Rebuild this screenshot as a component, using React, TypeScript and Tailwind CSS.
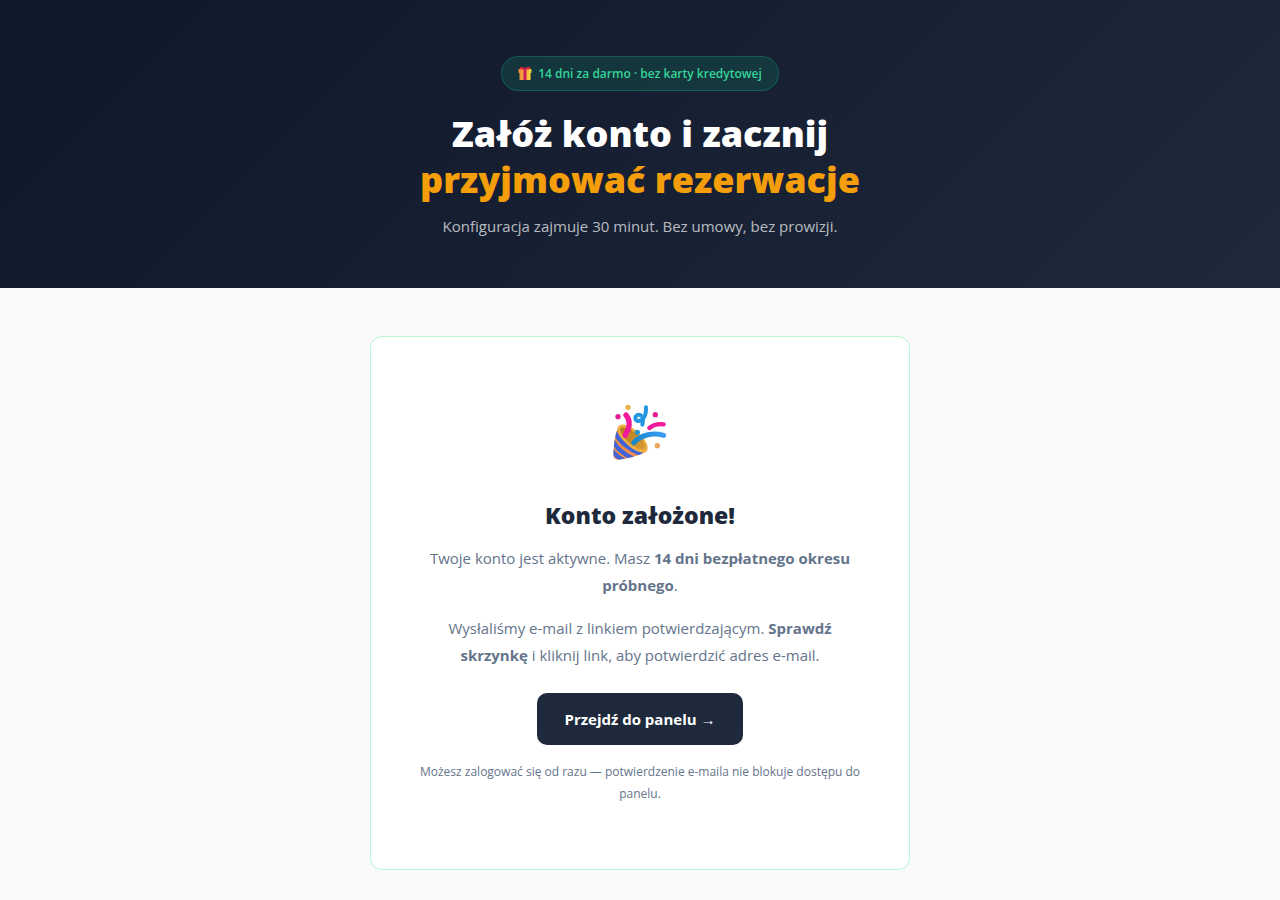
import React from "react";

function GiftIcon() {
    return (
        <svg className="size-4 shrink-0" viewBox="0 0 16 16" aria-hidden="true">
            <defs>
                <linearGradient id="giftBox" x1="0" y1="0" x2="1" y2="0">
                    <stop offset="0" stopColor="#f28c3a" />
                    <stop offset="1" stopColor="#fcd53f" />
                </linearGradient>
            </defs>
            <rect x="1.500" y="4" width="11" height="10" rx="0.6" fill="url(#giftBox)" />
            <rect x="0.500" y="3" width="13" height="4" rx="0.8" fill="url(#giftBox)" />
            <rect x="5.500" y="2.500" width="3" height="11.5" fill="#c8205f" />
            <path d="M1.500 2.300c0-1.100 2.200-1.600 3.800-.9l1.700.8 1.700-.8c1.600-.7 3.800-.2 3.800.9 0 .9-1.300 1.300-2.800 1.300H4.300c-1.500 0-2.800-.4-2.800-1.300z" fill="#d9263f" />
        </svg>
    );
}

function PartyIcon() {
    return (
        <svg className="mx-auto size-16" viewBox="24 27 192 192" aria-hidden="true">
            <defs>
                <linearGradient id="coneOuter" x1="0" y1="0" x2="1" y2="0.6">
                    <stop offset="0" stopColor="#e0943c" />
                    <stop offset="0.5" stopColor="#f28a4c" />
                    <stop offset="1" stopColor="#f7924e" />
                </linearGradient>
                <linearGradient id="coneInner" x1="0" y1="0" x2="1" y2="1">
                    <stop offset="0" stopColor="#b87a1e" />
                    <stop offset="1" stopColor="#d99a35" />
                </linearGradient>
                <linearGradient id="blueRibbon" x1="0" y1="0" x2="1" y2="0">
                    <stop offset="0" stopColor="#1688c9" />
                    <stop offset="1" stopColor="#3d9df5" />
                </linearGradient>
                <clipPath id="coneClip">
                    <path d="M56 102C46 120 40 165 40 190c0 8 6 13 14 13 25-2 68-13 88-26z" />
                </clipPath>
            </defs>
            <path d="M56 102C46 120 40 165 40 190c0 8 6 13 14 13 25-2 68-13 88-26z" fill="url(#coneOuter)" />
            <g clipPath="url(#coneClip)" fill="none" stroke="#3f63d8" strokeWidth="13">
                <path d="M44 120c12 28 46 54 82 68" />
                <path d="M38 146c10 20 32 40 62 54" />
                <path d="M34 172c6 12 20 24 38 34" />
            </g>
            <path d="M57 101c12-10 44 4 67 29 18 20 24 42 15 48-13 8-41-2-62-26-20-22-29-43-20-51z" fill="#eeb043" />
            <path d="M63 107c9-6 36 6 55 26 16 17 22 34 16 38-9 5-34-4-53-24-17-18-25-35-18-40z" fill="url(#coneInner)" />
            <path d="M78 69c10 12 12 26 7 42-4 8-8 12-9 19" fill="none" stroke="#f21a9c" strokeWidth="16" strokeLinecap="round" />
            <path d="M101 152c21-22 56-32 90-22" fill="none" stroke="url(#blueRibbon)" strokeWidth="15" strokeLinecap="round" />
            <path d="M148 108c11-9 26-13 43-11" fill="none" stroke="#f21a9c" strokeWidth="13" strokeLinecap="round" />
            <path d="M138 46c1 17-5 33-15 39-8 5-17 1-17-7 0-8 8-12 15-9 9 4 9 16 6 29" fill="none" stroke="#2497e0" strokeWidth="12" strokeLinecap="round" />
            <circle cx="112" cy="121" r="8" fill="#2a91cf" />
            <circle cx="54" cy="74" r="8" fill="#e51c98" />
            <circle cx="166" cy="68" r="8" fill="#e51c98" />
            <circle cx="84" cy="46" r="8" fill="#e8b449" />
            <circle cx="172" cy="161" r="8" fill="#e9a558" />
        </svg>
    );
}

export default function App() {
    return (
        <div className="min-h-screen bg-[#f9fafb] font-['Open_Sans',sans-serif] text-[#64748b]">
            <header className="bg-[linear-gradient(135deg,#0f172a,#1e293b)] px-6 pt-14 pb-12 text-center">
                <div className="inline-flex items-center gap-1 rounded-full border border-[#10b981]/30 bg-[#10b981]/15 px-4 py-1.5 text-xs leading-[21px] font-semibold text-[#34d399]">
                    <GiftIcon />
                    <span>14 dni za darmo · bez karty kredytowej</span>
                </div>
                <h1 className="mt-5 text-4xl leading-[46px] font-extrabold text-white">
                    Załóż konto i zacznij
                    <br />
                    <span className="text-[#f59e0b]">przyjmować rezerwacje</span>
                </h1>
                <p className="mt-2.5 text-[15px] leading-[27px] text-white/70">
                    Konfiguracja zajmuje 30 minut. Bez umowy, bez prowizji.
                </p>
            </header>

            <main className="px-6 pt-12 pb-7">
                <section className="mx-auto max-w-[540px] rounded-xl border border-[#bbf7d0] bg-white px-10 py-16 text-center">
                    <PartyIcon />
                    <h2 className="mt-8 text-[23px] leading-9 font-extrabold text-[#1e293b]">Konto założone!</h2>
                    <div className="mt-3 space-y-4 px-3 text-[15px] leading-[27px]">
                        <p>
                            Twoje konto jest aktywne. Masz <strong>14 dni bezpłatnego okresu próbnego</strong>.
                        </p>
                        <p>
                            Wysłaliśmy e-mail z linkiem potwierdzającym. <strong>Sprawdź skrzynkę</strong> i kliknij link, aby potwierdzić adres e-mail.
                        </p>
                    </div>
                    <a
                        href="#"
                        className="mt-6 inline-block rounded-[10px] bg-[#1e293b] px-7 py-3 text-[15px] leading-7 font-bold text-white"
                    >
                        Przejdź do panelu →
                    </a>
                    <p className="mt-4 text-xs leading-[22px]">
                        Możesz zalogować się od razu — potwierdzenie e-maila nie blokuje dostępu do panelu.
                    </p>
                </section>
            </main>
        </div>
    );
}
